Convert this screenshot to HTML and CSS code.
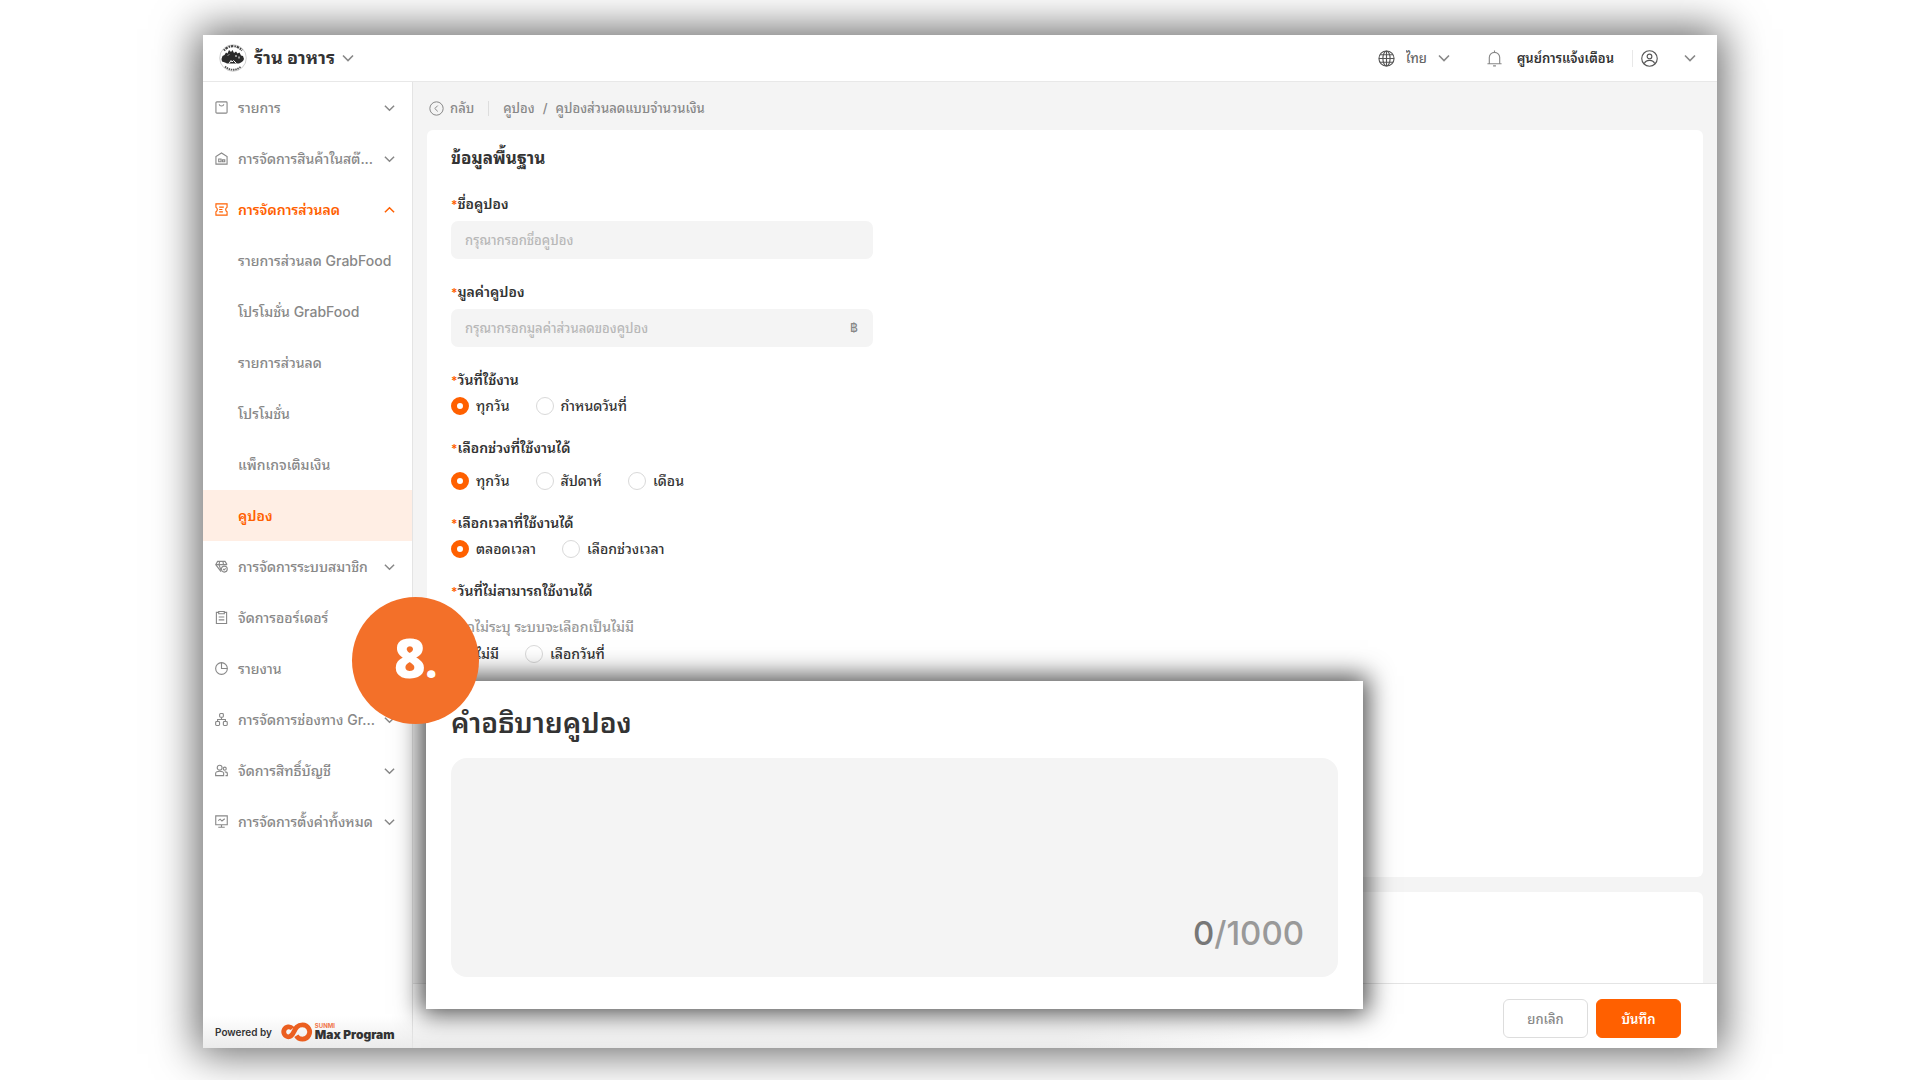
FILE: index.html
```html
<!DOCTYPE html>
<html lang="th">
<head>
    <meta charset="UTF-8">
    <meta name="viewport" content="width=device-width, initial-scale=1.0">
    <title>คูปองส่วนลดแบบจำนวนเงิน</title>
    <link rel="stylesheet" href="styles.css">
</head>
<body>
    <!-- Iconos compartidos -->
    <svg class="sprite">
        <symbol id="chevron" viewBox="0 0 12 8"><path d="M1 1.5l5 5 5-5"/></symbol>
    </svg>

    <div class="app">
        <header class="topbar">
            <svg class="shop-logo" viewBox="0 0 28 28">
                <circle cx="14" cy="14" r="13.3" fill="#fff" stroke="#bbb" stroke-width=".7"/>
                <path d="M5 6.500a11.500 11.500 0 0 1 18 0" fill="none" stroke="#444" stroke-width="2.200" stroke-dasharray="1.500 .8 2.500 1"/>
                <path d="M6 22.500a11.500 11.500 0 0 0 16 0" fill="none" stroke="#555" stroke-width="1.800" stroke-dasharray="1.500 .7"/>
                <path d="M2.500 15l1-3 2-1 1.500-2.500 1.500 1 1.500-3.500 2 2 1.500-2 1.500 3 2-1.500 1.500 2 2-1 1.500 3 2 .5 1 3-1 2-2 1.500-2 1h-12l-2-1-3-1z" fill="#2b2b2b"/>
                <path d="M10 19.500l2-3 1 1.500 1.500-1.500 3 3M17 11v2M20 12.500v2M9 11.500l1-1" fill="none" stroke="#fff" stroke-width="1"/>
            </svg>
            <select class="shop-select" aria-label="ร้าน"><option>ร้าน อาหาร</option></select>
            <svg class="chevron shop-chevron"><use href="#chevron"/></svg>

            <div class="topbar-right">
                <svg class="icon dark" viewBox="0 0 18 18">
                    <circle cx="9" cy="9" r="8"/><ellipse cx="9" cy="9" rx="3.800" ry="8"/>
                    <path d="M9 1v16M1 9h16M2.200 5h13.600M2.200 13h13.600"/>
                </svg>
                <select class="lang-select" aria-label="ภาษา"><option>ไทย</option></select>
                <svg class="chevron"><use href="#chevron"/></svg>
                <button class="notify">
                    <svg class="icon" viewBox="0 0 18 18">
                        <path d="M9 .5v1.500M3.500 14V8a5.500 5.500 0 0 1 11 0v6M1.500 14.500h15M7.500 16.800h3"/>
                    </svg>
                    ศูนย์การแจ้งเตือน
                </button>
                <button class="user" aria-label="บัญชี">
                    <svg class="icon dark" viewBox="0 0 18 18">
                        <circle cx="9" cy="9" r="8.200"/><circle cx="9" cy="6.800" r="2.500"/>
                        <path d="M3.500 14.500c1-3 3-3.500 5.500-3.500s4.500.5 5.500 3.500"/>
                    </svg>
                    <svg class="chevron"><use href="#chevron"/></svg>
                </button>
            </div>
        </header>

        <div class="body">
            <aside class="sidebar">
                <nav>
                    <a href="#" class="nav-item">
                        <svg class="nav-icon" viewBox="0 0 14 14"><rect x="1" y="1" width="12" height="12" rx="1"/><path d="M4.500 3.500c.5 2.500 4.500 2.500 5 0"/></svg>
                        <span>รายการ</span><svg class="chevron"><use href="#chevron"/></svg>
                    </a>
                    <a href="#" class="nav-item">
                        <svg class="nav-icon" viewBox="0 0 14 14"><path d="M1 13V5l6-4 6 4v8zM4 7.500h2.500v3H4zM8 8.500h2.500v2H8z"/></svg>
                        <span>การจัดการสินค้าในสต๊...</span><svg class="chevron"><use href="#chevron"/></svg>
                    </a>
                    <a href="#" class="nav-item open">
                        <svg class="nav-icon" viewBox="0 0 14 14"><path d="M1 1h12v3.500c-2 1-2 4 0 5V13H1V9.500c2-1 2-4 0-5zM4.500 4.500h5M4.500 7h3.500M4.500 9.500h4"/></svg>
                        <span>การจัดการส่วนลด</span><svg class="chevron up"><use href="#chevron"/></svg>
                    </a>
                    <a href="#" class="nav-item sub"><span>รายการส่วนลด GrabFood</span></a>
                    <a href="#" class="nav-item sub"><span>โปรโมชั่น GrabFood</span></a>
                    <a href="#" class="nav-item sub"><span>รายการส่วนลด</span></a>
                    <a href="#" class="nav-item sub"><span>โปรโมชั่น</span></a>
                    <a href="#" class="nav-item sub"><span>แพ็กเกจเติมเงิน</span></a>
                    <a href="#" class="nav-item sub active"><span>คูปอง</span></a>
                    <a href="#" class="nav-item">
                        <svg class="nav-icon" viewBox="0 0 14 14"><path d="M6.500 12.500L.8 5l2-3.500h8L13 5M.8 5H13M5 1.500L4.300 5l2 5.500M8.500 1.500l.7 3.500"/><circle cx="10" cy="9.800" r="3.200"/><path d="M8.600 9.500l1.200 1.200 1.700-1.700"/></svg>
                        <span>การจัดการระบบสมาชิก</span><svg class="chevron"><use href="#chevron"/></svg>
                    </a>
                    <a href="#" class="nav-item">
                        <svg class="nav-icon" viewBox="0 0 14 14"><path d="M4 1.500H1.500v12h11v-12H10M4 .5h6v2.500H4zM4 6.500h6M4 9.500h6"/></svg>
                        <span>จัดการออร์เดอร์</span>
                    </a>
                    <a href="#" class="nav-item">
                        <svg class="nav-icon" viewBox="0 0 14 14"><circle cx="7" cy="7" r="6.300"/><path d="M7 .7V7h6.300"/></svg>
                        <span>รายงาน</span>
                    </a>
                    <a href="#" class="nav-item">
                        <svg class="nav-icon" viewBox="0 0 14 14"><rect x="5" y=".6" width="4" height="4" rx="1"/><rect x=".7" y="9.200" width="4.200" height="4.200" rx="1"/><rect x="9" y="9.200" width="4.200" height="4.200" rx="1"/><path d="M7 4.600V7M2.800 9.200V7h8.400v2.200"/></svg>
                        <span>การจัดการช่องทาง Gr...</span><svg class="chevron"><use href="#chevron"/></svg>
                    </a>
                    <a href="#" class="nav-item">
                        <svg class="nav-icon" viewBox="0 0 14 14"><circle cx="5" cy="4" r="2.600"/><path d="M.7 12.500V10c0-3 8.600-3 8.600 0v2.500z"/><circle cx="10.500" cy="5" r="1.600"/><path d="M10.500 8.500c2 0 2.800.8 2.800 2v2h-2"/></svg>
                        <span>จัดการสิทธิ์บัญชี</span><svg class="chevron"><use href="#chevron"/></svg>
                    </a>
                    <a href="#" class="nav-item">
                        <svg class="nav-icon" viewBox="0 0 14 14"><path d="M.8 1h12.400v9.500H.8zM3.500 13.200h7M7 10.500v2.700M3.500 6l2-1.500 2 2L10.500 4"/></svg>
                        <span>การจัดการตั้งค่าทั้งหมด</span><svg class="chevron"><use href="#chevron"/></svg>
                    </a>
                </nav>
                <div class="powered">
                    <span>Powered by</span>
                    <svg class="brand-logo" viewBox="0 0 34 20">
                        <path d="M12.500 6.500A5 5 0 1 0 8.500 14.800C15 14.800 13 2.800 22.500 2.800a7.200 7.200 0 1 1-6.200 11" fill="none" stroke="#eb5f20" stroke-width="4.800"/>
                    </svg>
                    <span class="brand"><small>SUNMI</small><b>Max Program</b></span>
                </div>
            </aside>

            <main class="main">
                <div class="content">
                    <div class="breadcrumb">
                        <a href="#" class="back">
                            <svg class="icon" viewBox="0 0 18 18"><circle cx="9" cy="9" r="8"/><path d="M10.500 5.500L7 9l3.500 3.500"/></svg>
                            กลับ
                        </a>
                        <a href="#">คูปอง</a><span>/</span><a href="#">คูปองส่วนลดแบบจำนวนเงิน</a>
                    </div>

                    <form class="card" id="coupon-form">
                        <h2>ข้อมูลพื้นฐาน</h2>
                        <div class="field">
                            <label class="label" for="name">ชื่อคูปอง</label>
                            <input class="text-input" type="text" id="name" placeholder="กรุณากรอกชื่อคูปอง">
                        </div>
                        <div class="field">
                            <label class="label" for="value">มูลค่าคูปอง</label>
                            <div class="input-group">
                                <input class="text-input" type="text" id="value" placeholder="กรุณากรอกมูลค่าส่วนลดของคูปอง">
                                <span class="unit">฿</span>
                            </div>
                        </div>
                        <div class="field" role="radiogroup" aria-labelledby="l-days">
                            <div class="label" id="l-days">วันที่ใช้งาน</div>
                            <div class="radios">
                                <label><input type="radio" name="days" checked>ทุกวัน</label>
                                <label><input type="radio" name="days">กำหนดวันที่</label>
                            </div>
                        </div>
                        <div class="field spaced" role="radiogroup" aria-labelledby="l-period">
                            <div class="label" id="l-period">เลือกช่วงที่ใช้งานได้</div>
                            <div class="radios">
                                <label><input type="radio" name="period" checked>ทุกวัน</label>
                                <label><input type="radio" name="period">สัปดาห์</label>
                                <label><input type="radio" name="period">เดือน</label>
                            </div>
                        </div>
                        <div class="field" role="radiogroup" aria-labelledby="l-time">
                            <div class="label" id="l-time">เลือกเวลาที่ใช้งานได้</div>
                            <div class="radios">
                                <label><input type="radio" name="time" checked>ตลอดเวลา</label>
                                <label><input type="radio" name="time">เลือกช่วงเวลา</label>
                            </div>
                        </div>
                        <div class="field" role="radiogroup" aria-labelledby="l-except">
                            <div class="label" id="l-except">วันที่ไม่สามารถใช้งานได้</div>
                            <p class="hint">หากไม่ระบุ ระบบจะเลือกเป็นไม่มี</p>
                            <div class="radios">
                                <label><input type="radio" name="except" checked>ไม่มี</label>
                                <label><input type="radio" name="except">เลือกวันที่</label>
                            </div>
                        </div>
                    </form>
                    <div class="card card-next"></div>
                </div>

                <footer class="actions">
                    <button class="btn" type="button">ยกเลิก</button>
                    <button class="btn primary" type="submit" form="coupon-form">บันทึก</button>
                </footer>
            </main>
        </div>

        <section class="popup">
            <label for="description">คำอธิบายคูปอง</label>
            <div class="textarea-wrap">
                <textarea id="description" maxlength="1000"></textarea>
                <div class="counter"><b>0</b>/1000</div>
            </div>
        </section>
        <div class="step">8<span>.</span></div>
    </div>
</body>
</html>
```
FILE: styles.css
```css
* {
    box-sizing: border-box;
}

body {
    margin: 0;
    padding: 35px 203px 32px;
    height: 100vh;
    overflow: hidden;
    background: #fff;
    color: #333;
    font-family: Inter, "Noto Sans Thai Looped", Loma, "Noto Sans Thai", "Noto Sans", sans-serif;
    font-size: 14px;
    font-weight: 500;
    line-height: 20px;
}

a {
    color: inherit;
    text-decoration: none;
}

button,
select,
input,
textarea {
    font: inherit;
    color: inherit;
    border: none;
    background: none;
    padding: 0;
    margin: 0;
}

select {
    appearance: none;
}

.sprite {
    display: none;
}

.app {
    position: relative;
    display: flex;
    flex-direction: column;
    height: 100%;
    background: #fff;
    box-shadow: 0 0 40px 6px rgba(0, 0, 0, 0.6);
}

.icon {
    width: 17px;
    height: 17px;
    flex: none;
    fill: none;
    stroke: #888;
    stroke-width: 1.2;
}

.icon.dark {
    stroke: #555;
}

.chevron {
    width: 12px;
    height: 8px;
    flex: none;
    fill: none;
    stroke: #888;
    stroke-width: 1.6;
}

/* Barra superior */
.topbar {
    display: flex;
    align-items: center;
    height: 47px;
    padding: 0 21px 0 16px;
    border-bottom: 1px solid #e8e8e8;
}

.shop-logo {
    width: 28px;
    height: 28px;
    margin-right: 7px;
}

.shop-select {
    font-size: 18px;
    font-weight: 700;
    line-height: 28px;
}

.shop-chevron {
    margin-left: 6px;
}

.topbar-right {
    display: flex;
    align-items: center;
    margin-left: auto;
    font-size: 13px;
}

.lang-select {
    margin: 0 10px 0 11px;
    color: #666;
}

.notify {
    display: flex;
    align-items: center;
    gap: 14px;
    margin-left: 36px;
    padding-right: 18px;
    border-right: 1px solid #e8e8e8;
    line-height: 16px;
    font-weight: 600;
}

.user {
    display: flex;
    align-items: center;
    gap: 26px;
    margin-left: 8px;
}

.body {
    display: flex;
    flex: 1;
    min-height: 0;
}

/* Menú lateral */
.sidebar {
    display: flex;
    flex-direction: column;
    width: 210px;
    flex: none;
    border-right: 1px solid #e4e4e4;
}

.nav-item {
    display: flex;
    align-items: center;
    height: 51px;
    padding: 0 17px 0 12px;
    color: #888;
}

.nav-item span {
    flex: 1;
    margin-left: 10px;
    white-space: nowrap;
}

.nav-item.sub span {
    margin-left: 23px;
}

.nav-item.open,
.nav-item.active {
    color: #ff6000;
    font-weight: 600;
}

.nav-item.active {
    background: #ffeee4;
}

.nav-icon {
    width: 13px;
    height: 13px;
    flex: none;
    fill: none;
    stroke: currentColor;
    stroke-width: 1.2;
}

.nav-item .chevron {
    width: 11px;
    stroke: currentColor;
}

.chevron.up {
    transform: rotate(180deg);
}

.powered {
    display: flex;
    align-items: center;
    height: 32px;
    margin-top: auto;
    padding-left: 12px;
    background: linear-gradient(#fff, #ebebeb);
    font-size: 10px;
    font-weight: 600;
}

.brand-logo {
    width: 34px;
    height: 20px;
    margin: 0 1px 0 8px;
}

.brand {
    display: flex;
    flex-direction: column;
}

.brand small {
    color: #f0764a;
    font-size: 6px;
    font-weight: 700;
    line-height: 6px;
}

.brand b {
    font-size: 12px;
    font-weight: 900;
    line-height: 12px;
}

/* Contenido */
.main {
    display: flex;
    flex-direction: column;
    flex: 1;
    min-width: 0;
    background: #f4f4f4;
}

.content {
    flex: 1;
    min-height: 0;
    padding: 0 14px;
    overflow: hidden;
}

.breadcrumb {
    display: flex;
    align-items: center;
    gap: 8px;
    height: 48px;
    padding: 4px 0 0 2px;
    color: #888;
    font-size: 13px;
}

.back {
    display: flex;
    align-items: center;
    gap: 6px;
    margin-right: 6px;
    padding-right: 14px;
    border-right: 1px solid #ddd;
    line-height: 14px;
}

.back .icon {
    width: 15px;
    height: 15px;
}

.card {
    min-height: 747px;
    margin-bottom: 15px;
    padding: 16px 24px;
    border-radius: 6px;
    background: #fff;
}

.card h2 {
    margin: 0 0 24px;
    font-size: 17px;
    font-weight: 700;
    line-height: 24px;
}

.field {
    margin-bottom: 23px;
}

.label {
    display: block;
    height: 20px;
    margin-bottom: 7px;
    font-weight: 600;
}

.label::before {
    content: "*";
    color: #ff6000;
    font-size: 12px;
}

.field.spaced .label {
    margin-bottom: 14px;
}

.text-input {
    display: block;
    width: 100%;
    max-width: 422px;
    height: 38px;
    padding: 0 14px;
    border-radius: 7px;
    background: #f4f4f4;
    font-size: 13px;
}

.text-input::placeholder {
    color: #b8b8b8;
}

.input-group {
    position: relative;
    max-width: 422px;
}

.unit {
    position: absolute;
    top: 9px;
    right: 15px;
    color: #888;
    font-size: 12px;
}

.radios {
    display: flex;
    gap: 26px;
    height: 18px;
}

.radios label {
    display: flex;
    align-items: center;
    gap: 7px;
}

.radios input {
    appearance: none;
    width: 18px;
    height: 18px;
    border: 1px solid #d9d9d9;
    border-radius: 50%;
    background: #fff;
}

.radios input:checked {
    border: 6px solid #ff6000;
}

.hint {
    margin: 16px 0 8px;
    color: #999;
}

.actions {
    display: flex;
    gap: 8px;
    height: 65px;
    padding: 15px 36px 0;
    justify-content: flex-end;
    border-top: 1px solid #e4e4e4;
    background: linear-gradient(#fff, #fff 50%, transparent), linear-gradient(90deg, #ebebeb 50%, #fff 70%);
}

.btn {
    width: 85px;
    height: 39px;
    border: 1px solid #ddd;
    border-radius: 6px;
    background: #fff;
    color: #888;
    font-size: 13px;
}

.btn.primary {
    border-color: #ff6000;
    background: #ff6000;
    color: #fff;
    font-weight: 600;
}

/* Ventana ampliada sobre el formulario */
.popup {
    position: absolute;
    left: 223px;
    right: 354px;
    bottom: 39px;
    padding: 24px 25px 32px;
    background: #fff;
    box-shadow: 0 0 24px 5px rgba(0, 0, 0, 0.7);
}

.popup label {
    display: block;
    margin-bottom: 17px;
    font-size: 28px;
    font-weight: 600;
    line-height: 36px;
}

.textarea-wrap {
    position: relative;
}

.popup textarea {
    display: block;
    width: 100%;
    height: 219px;
    padding: 16px;
    border-radius: 16px;
    background: #f4f4f4;
    resize: none;
}

.counter {
    position: absolute;
    right: 34px;
    bottom: 24px;
    color: #999;
    font-size: 33px;
    line-height: 40px;
}

.counter b {
    color: #777;
    font-weight: 500;
}

.step {
    position: absolute;
    left: 149px;
    bottom: 324px;
    width: 127px;
    height: 127px;
    border-radius: 50%;
    background: #f37029;
    color: #fff;
    font-family: "Open Sans", sans-serif;
    font-size: 54px;
    font-weight: 800;
    line-height: 120px;
    text-align: center;
}

.step span {
    font-size: 40px;
}
```
